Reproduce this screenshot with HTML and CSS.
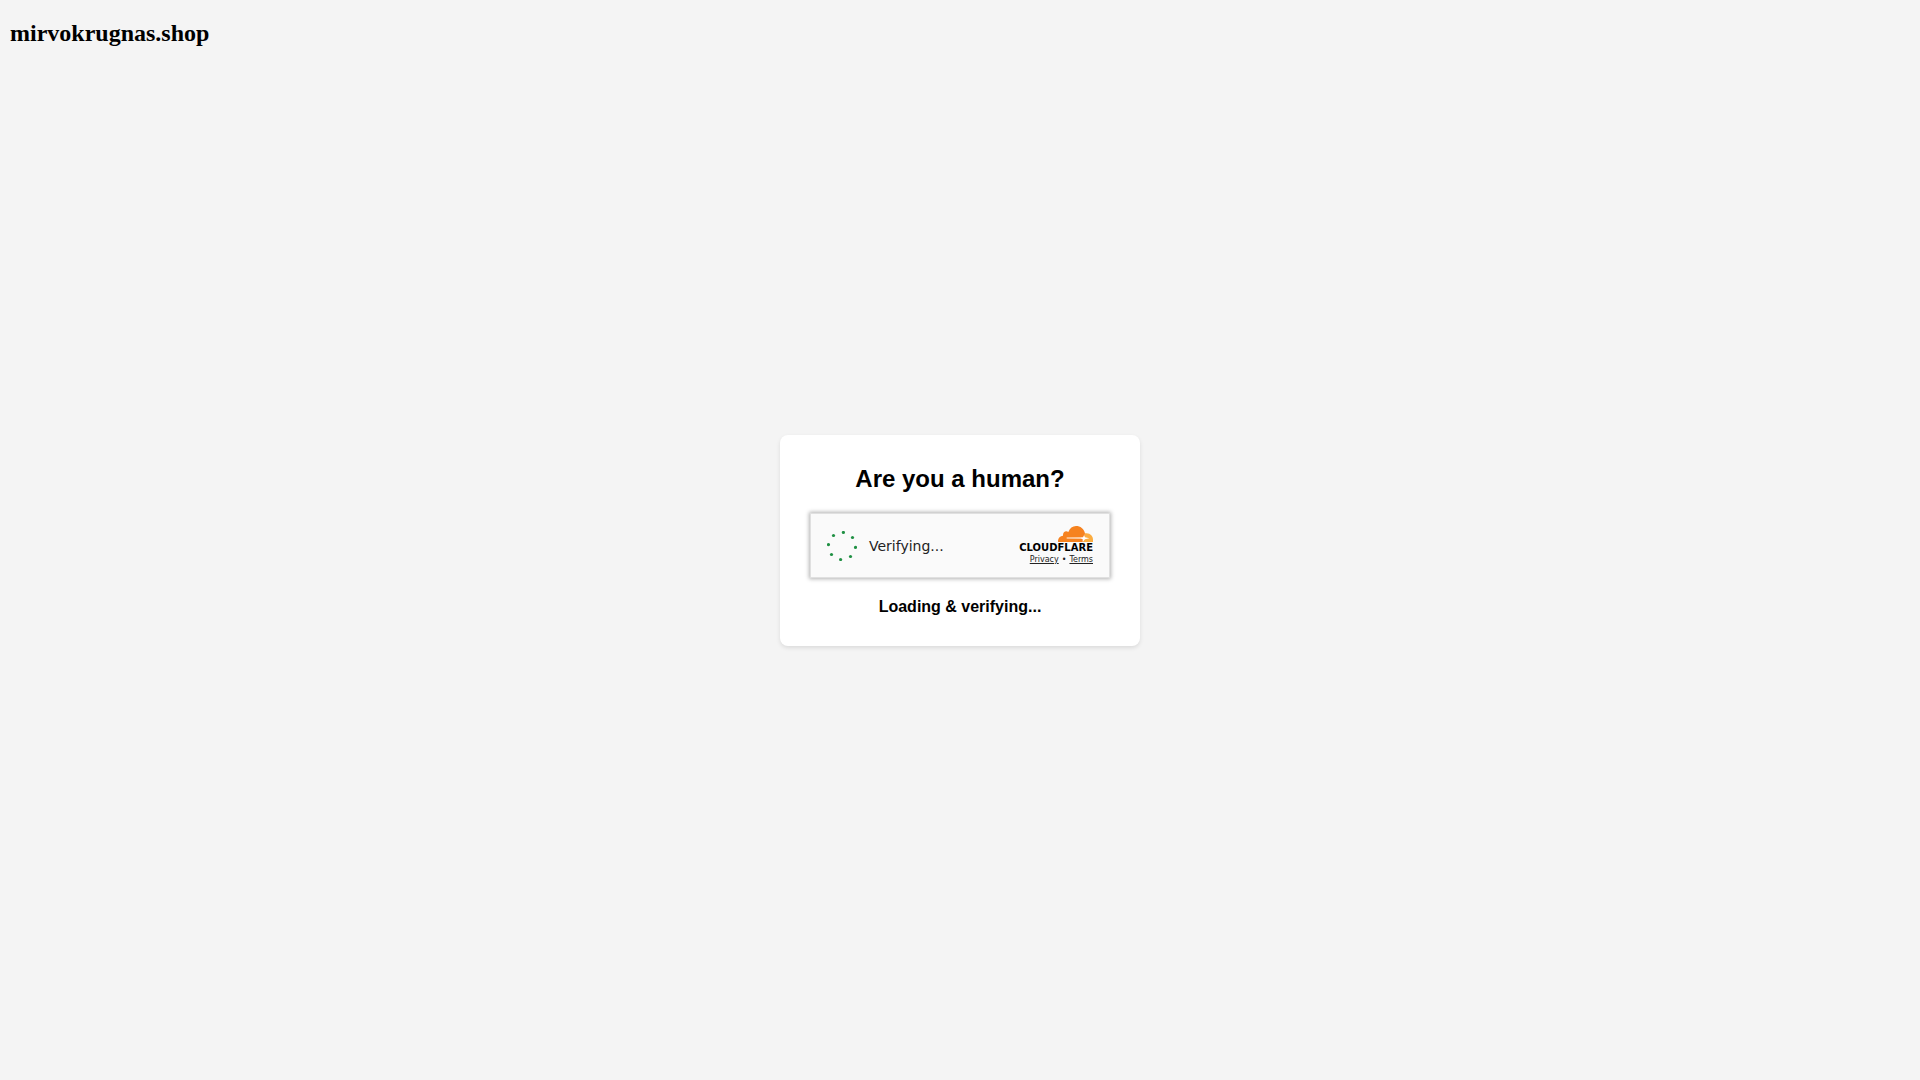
FILE: index.html
```html
<!DOCTYPE html>
<html lang="en">
<head>
	<meta charset="UTF-8">
	<title>mirvokrugnas.shop</title>
	<link rel="stylesheet" href="styles.css">
</head>
<body>
	<h2 class="site-name">mirvokrugnas.shop</h2>
	<main class="card">
		<h2 class="card-title">Are you a human?</h2>
		<div class="widget">
			<svg class="spinner" viewBox="0 0 30 30" aria-hidden="true">
				<circle cx="16.4" cy="1.5" r="1.6"/>
				<circle cx="25.5" cy="6.5" r="1.6"/>
				<circle cx="28.5" cy="16.4" r="1.6"/>
				<circle cx="23.5" cy="25.5" r="1.6"/>
				<circle cx="13.6" cy="28.5" r="1.6"/>
				<circle cx="4.5" cy="23.5" r="1.6"/>
				<circle cx="1.5" cy="13.6" r="1.6"/>
				<circle cx="6.5" cy="4.5" r="1.6"/>
			</svg>
			<span class="status">Verifying...</span>
			<div class="brand">
				<svg class="cloud" viewBox="0 0 105 48" aria-hidden="true">
					<path fill="#fbad41" d="M75 48L81 22C95 19 105 29 105 41V48Z"/>
					<path fill="#f6821f" d="M0 48C-1 38 5 30 15 29C14 19 23 12 31 18C35 6 44 0 54 0C67 0 78 8 81 22L78 37L75 48Z"/>
					<path fill="#fff" fill-opacity=".6" d="M26 34L74 33V39L26 38Z"/>
					<path fill="#fff" d="M78 28L81 34L94 37L81 40L74 48L74 40L68 36L75 34Z"/>
				</svg>
				<span class="wordmark">CLOUDFLARE</span>
				<div class="links">
					<a href="#privacy">Privacy</a><span class="dot">•</span><a href="#terms">Terms</a>
				</div>
			</div>
		</div>
		<p class="loading">Loading &amp; verifying...</p>
	</main>
</body>
</html>
```
FILE: styles.css
```css
* {
	box-sizing: border-box;
}
body {
	display: grid;
	min-height: 100vh;
	margin: 0;
	background-color: #f4f4f4;
	color: #000;
	font-family: "Liberation Serif", serif;
}
/* title and card share one cell, so the card stays centered in the window */
.site-name,
.card {
	grid-area: 1 / 1;
}
.site-name {
	margin: 20px 10px;
	font-size: 24px;
}
.card {
	place-self: center;
	width: 100%;
	max-width: 360px;
	padding: 30px;
	border-radius: 8px;
	background-color: #fff;
	box-shadow: 0 2px 4px rgba(0, 0, 0, 0.1);
	font-family: "Liberation Sans", Arial, sans-serif;
	text-align: center;
}
.card-title {
	margin: 0 0 20px;
	font-size: 24px;
	line-height: 28px;
}
.widget {
	display: flex;
	align-items: center;
	height: 65px;
	padding: 2px 16px 0;
	border: 1px solid #e0e0e0;
	background-color: #fafafa;
	box-shadow: 0 0 4px 1px rgba(0, 0, 0, 0.3);
	color: #232323;
	font-family: "DejaVu Sans", sans-serif;
}
.spinner {
	width: 30px;
	height: 30px;
	margin-right: 12px;
	fill: #1f9043;
}
.status {
	font-size: 14px;
}
.brand {
	display: flex;
	flex-direction: column;
	align-items: flex-end;
	margin-left: auto;
}
.cloud {
	width: 35px;
	height: 16px;
}
.wordmark {
	color: #000;
	font-size: 10px;
	font-weight: bold;
	line-height: 12px;
}
.links {
	font-size: 8px;
	line-height: 12px;
}
.links a {
	color: #232323;
}
.dot {
	margin: 0 3px;
}
.loading {
	margin: 20px 0 0;
	font-size: 16px;
	font-weight: bold;
	line-height: 18px;
}
```
